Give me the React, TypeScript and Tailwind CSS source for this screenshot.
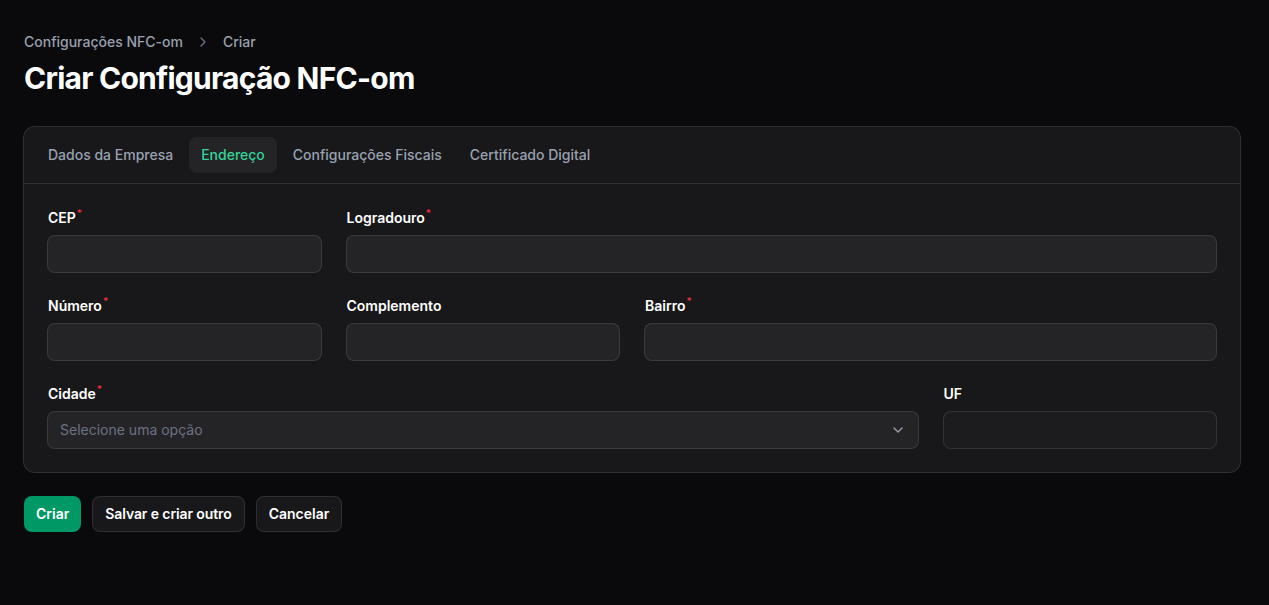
import { ChevronRight, ChevronDown } from "lucide-react"

function Label({ text, required }: { text: string; required?: boolean }) {
  return (
    <label className="flex h-5 items-center pl-px pt-px text-sm font-semibold leading-5 text-white">
      {text}
      {required && <sup className="ml-px text-[10px] font-medium text-red-500">*</sup>}
    </label>
  )
}

function Field({
  label,
  required,
  span = "col-span-1",
  disabled,
}: {
  label: string
  required?: boolean
  span?: string
  disabled?: boolean
}) {
  return (
    <div className={`${span} flex flex-col gap-2`}>
      <Label text={label} required={required} />
      <div
        className={`h-[38px] rounded-lg border border-white/10 ${
          disabled ? "bg-[#1c1c1f]" : "bg-[#242427]"
        }`}
      />
    </div>
  )
}

export default function App() {
  const tabs = ["Dados da Empresa", "Endereço", "Configurações Fiscais", "Certificado Digital"]

  return (
    <div
      className="min-h-[605px] bg-[#0a0a0c] pl-[23px] pr-[28px] pt-8"
      style={{ fontFamily: "Inter, 'Noto Sans', sans-serif" }}
    >
      <nav className="flex items-center gap-x-2 pl-px text-sm font-medium text-gray-400">
        <span>Configurações NFC-om</span>
        <ChevronRight className="mx-1 h-4 w-4 text-gray-500" />
        <span>Criar</span>
      </nav>
      <h1 className="mt-2 pl-px text-3xl font-bold tracking-tight text-white">Criar Configuração NFC-om</h1>

      <div className="mt-[30px] rounded-xl border border-white/10 bg-[#18181b]">
        <div className="flex gap-x-1 border-b border-white/10 px-3 py-2.5">
          {tabs.map((t) => (
            <div
              key={t}
              className={`flex h-9 items-center rounded-lg px-3 text-sm font-medium ${
                t === "Endereço" ? "bg-white/5 text-[#34d399]" : "text-gray-400"
              }`}
            >
              {t}
            </div>
          ))}
        </div>

        <div className="grid grid-cols-4 gap-x-6 gap-y-[22px] p-[23px]">
          <Field label="CEP" required />
          <Field label="Logradouro" required span="col-span-3" />
          <Field label="Número" required />
          <Field label="Complemento" />
          <Field label="Bairro" required span="col-span-2" />
          <div className="col-span-3 flex flex-col gap-2">
            <Label text="Cidade" required />
            <div className="flex h-[38px] items-center justify-between rounded-lg border border-white/10 bg-[#242427] px-3">
              <span className="text-sm text-gray-500">Selecione uma opção</span>
              <ChevronDown className="h-4 w-4 text-gray-400" />
            </div>
          </div>
          <Field label="UF" disabled />
        </div>
      </div>

      <div className="mt-[23px] flex gap-[11px] pl-px">
        <button className="h-9 rounded-lg bg-[#009966] px-3 text-sm font-semibold text-white">Criar</button>
        <button className="h-9 rounded-lg border border-white/10 bg-[#18181b] px-3 text-sm font-semibold tracking-[-0.1px] text-white">
          Salvar e criar outro
        </button>
        <button className="h-9 rounded-lg border border-white/10 bg-[#18181b] px-3 text-sm font-semibold text-white">
          Cancelar
        </button>
      </div>
    </div>
  )
}
